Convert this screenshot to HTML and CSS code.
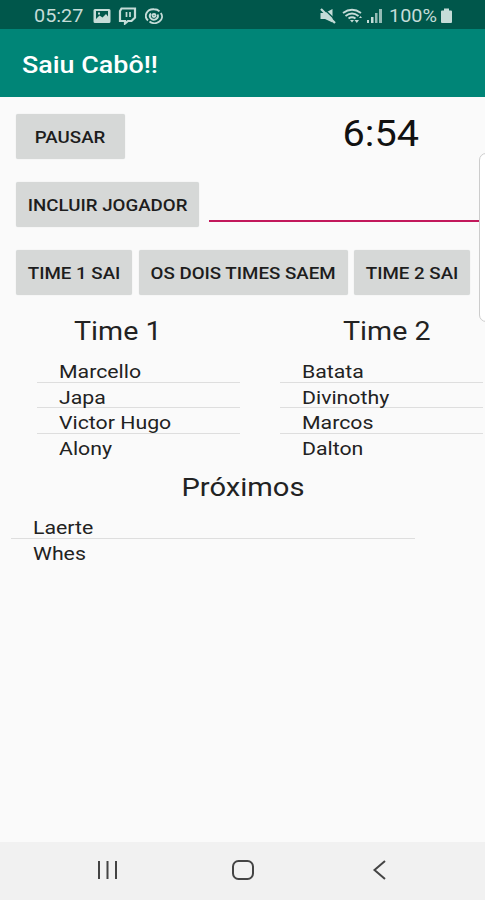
FILE: index.html
```
<!doctype html>
<html lang="pt-BR">
	<head>
		<meta charset="utf-8">
		<title>Saiu Cabô!!</title>
		<link rel="stylesheet" href="styles.css">
	</head>
	<body>
		<div class="status">
			<span class="clock"><span class="wide">05:27</span></span>
			<svg class="picture" width="18" height="16" viewBox="0 0 18 16">
				<path fill="currentColor" fill-rule="evenodd" d="M2 1h14q1.500 0 1.500 1.500v11q0 1.500-1.500 1.500H2q-1.500 0-1.500-1.500v-11Q.5 1 2 1zM3 3v8l3.500-3.500 3 2L13 6l2 2.500V3zM5 4.500h2v2H5z"/>
			</svg>
			<svg class="twitch" width="19" height="18" viewBox="0 0 19 18">
				<path fill="none" stroke="currentColor" stroke-width="2.200" d="M3.500 1.500H17v9l-3.500 3.500H10l-3 2.500V14H2V4z"/>
				<path stroke="currentColor" stroke-width="1.700" d="M8.500 5v5M12 5v5"/>
			</svg>
			<svg class="swirl" width="18" height="16" viewBox="0 0 18 16">
				<g fill="none" stroke="currentColor" stroke-width="1.900">
					<path d="M3 12.500A7.500 6.600 0 0 1 9 1.300q3.500 0 5.500 2M15.800 5A7.500 6.600 0 0 1 4.500 13.500"/>
					<path d="M6 5.500a4 3.600 0 1 0 6.500 1"/>
					<circle cx="9" cy="7.500" r="1.500"/>
				</g>
			</svg>
			<span class="space"></span>
			<svg class="mute" width="16" height="16" viewBox="0 0 16 16">
				<path fill="currentColor" d="M.5 5H5l7.500-4v13.500L5 11H.5z"/>
				<path stroke="#00574b" stroke-width="1.300" d="M3 0L16 12.500"/>
				<path stroke="currentColor" stroke-width="2.200" d="M1 1l14 14"/>
			</svg>
			<svg class="wifi" width="21" height="16" viewBox="0 0 21 16">
				<g fill="none" stroke="currentColor" stroke-width="1.900">
					<path d="M1 5Q10 -1.500 19 5M3.500 8Q10 3 16.500 8M6.500 10.500Q10 8 13.500 10.500"/>
				</g>
				<path fill="currentColor" d="M8 12h4l-2 2.500zM12.500 12h4.500l-2.200 3zM17 10l1.500-2L20 10z"/>
			</svg>
			<svg class="signal" width="16" height="16" viewBox="0 0 16 16">
				<path fill="currentColor" d="M0 12h2v3H0zM4 9h2.500v6H4z"/>
				<path fill="currentColor" opacity=".75" d="M8 5h2.500v10H8zM12 1h3v14h-3z"/>
			</svg>
			<span class="percent"><span class="wide">100%</span></span>
			<svg width="13" height="16" viewBox="0 0 13 16">
				<path fill="currentColor" d="M4 .5h5v2h2q1 0 1 1V14q0 1-1 1H2q-1 0-1-1V3.500q0-1 1-1h2z"/>
			</svg>
		</div>

		<div class="appbar"><span class="wide">Saiu Cabô!!</span></div>

		<div class="body">
			<div class="row">
				<button class="pause"><span class="wide">PAUSAR</span></button>
				<div class="timer"><span class="wide">6:54</span></div>
			</div>
			<div class="row">
				<button class="include"><span class="wide">INCLUIR JOGADOR</span></button>
				<input class="player" type="text">
			</div>
			<div class="row">
				<button class="team"><span class="wide">TIME 1 SAI</span></button>
				<button class="both"><span class="wide">OS DOIS TIMES SAEM</span></button>
				<button class="team"><span class="wide">TIME 2 SAI</span></button>
			</div>

			<div class="teams">
				<div>
					<h3 class="first"><span class="wide">Time 1</span></h3>
					<ul>
						<li><span class="wide">Marcello</span></li>
						<li><span class="wide">Japa</span></li>
						<li><span class="wide">Victor Hugo</span></li>
						<li><span class="wide">Alony</span></li>
					</ul>
				</div>
				<div>
					<h3 class="second"><span class="wide">Time 2</span></h3>
					<ul>
						<li><span class="wide">Batata</span></li>
						<li><span class="wide">Divinothy</span></li>
						<li><span class="wide">Marcos</span></li>
						<li><span class="wide">Dalton</span></li>
					</ul>
				</div>
			</div>

			<h3 class="next"><span class="wide">Próximos</span></h3>
			<ul class="queue">
				<li><span class="wide">Laerte</span></li>
				<li><span class="wide">Whes</span></li>
			</ul>
		</div>

		<div class="edge"></div>

		<div class="nav">
			<svg width="24" height="22" viewBox="0 0 24 22">
				<path stroke="currentColor" stroke-width="2" d="M4 2v18M12.500 2v18M21 2v18"/>
			</svg>
			<svg width="24" height="22" viewBox="0 0 24 22">
				<rect x="2" y="2" width="20" height="18" rx="5.500" fill="none" stroke="currentColor" stroke-width="2"/>
			</svg>
			<svg width="24" height="22" viewBox="0 0 24 22">
				<path fill="none" stroke="currentColor" stroke-width="2" d="M18 2L7.500 11 18 20"/>
			</svg>
		</div>
	</body>
</html>
```
FILE: styles.css
```
html, body {
	margin: 0;
	padding: 0;
	font-family: Roboto, sans-serif;
}

body {
	display: flex;
	flex-direction: column;
	height: 900px;
	overflow: hidden;
	position: relative;
	background-color: #fafafa;
	color: #222;
}

/* the whole screen is drawn a bit wider than tall */
.wide {
	display: inline-block;
	white-space: nowrap;
	transform: scaleX(1.1);
}

.status {
	display: flex;
	align-items: center;
	box-sizing: border-box;
	height: 29px;
	padding: 2px 32px 0 34px;
	background-color: #00574b;
	color: #c5dcd8;
	font-size: 18px;
}

.status .wide,
.appbar .wide,
li .wide { transform-origin: left; }

.appbar .wide,
li .wide { transform: scaleX(1.12); }

.clock { width: 59px; }
.picture { margin-right: 7px; }
.twitch { margin-right: 8px; }
.space { flex: 1; }
.mute { margin-right: 6px; }
.wifi { margin-right: 4px; }
.signal { margin-right: 6px; }
.percent { width: 51px; }

.appbar {
	height: 68px;
	padding-left: 22px;
	line-height: 73px;
	background-color: #008577;
	color: white;
	font-size: 24px;
	font-weight: 500;
}

.body {
	flex: 1;
	padding-top: 17px;
}

.row {
	display: flex;
	height: 45px;
	margin-bottom: 23px;
	padding-left: 16px;
}

button {
	padding: 0;
	border: 0 none;
	border-radius: 2px;
	background-color: #d6d8d7;
	box-shadow: 0 0 1px #d6d8d7;
	color: #1d1d1d;
	font: 500 17px Roboto, sans-serif;
}

.pause { width: 109px; }
.include { width: 183px; }
.team { width: 116px; }
.both { width: 209px; margin: 0 6px 0 7px; }

.timer {
	width: 78px;
	margin-left: 217px;
	line-height: 41px;
	font-size: 36px;
	text-align: center;
	color: #111;
}

.player {
	width: 271px;
	height: 40px;
	box-sizing: border-box;
	margin-left: 10px;
	padding: 0;
	border: 0 none;
	border-bottom: 2px solid #c2185b;
	outline: 0;
	background: none;
}

.teams {
	display: flex;
	gap: 40px;
	padding-left: 37px;
}

.teams > div { width: 203px; }

h3 {
	margin: 0;
	height: 39px;
	line-height: 26px;
	font-size: 26px;
	font-weight: normal;
	text-align: center;
}

h3.first { margin-left: -42px; }
h3.second { margin-left: 10px; }

h3.next {
	margin-top: 15px;
	font-size: 26.5px;
}

ul {
	list-style: none;
	margin: 0;
	padding: 0;
}

li {
	box-sizing: border-box;
	height: 25.5px;
	padding-left: 22px;
	border-bottom: 1px solid #dedede;
	line-height: 30px;
	font-size: 19px;
}

li:last-child { border-bottom: 0 none; }

.queue {
	width: 404px;
	margin-left: 11px;
}

/* handle of the side panel */
.edge {
	position: absolute;
	top: 153px;
	right: -10px;
	width: 14px;
	height: 167px;
	border: 1px solid #ccc;
	border-radius: 7px;
	background-color: white;
}

.nav {
	display: flex;
	justify-content: center;
	align-items: center;
	gap: 112px;
	box-sizing: border-box;
	height: 58px;
	padding-bottom: 2px;
	background-color: #f1f1f1;
	color: #444;
}
```
